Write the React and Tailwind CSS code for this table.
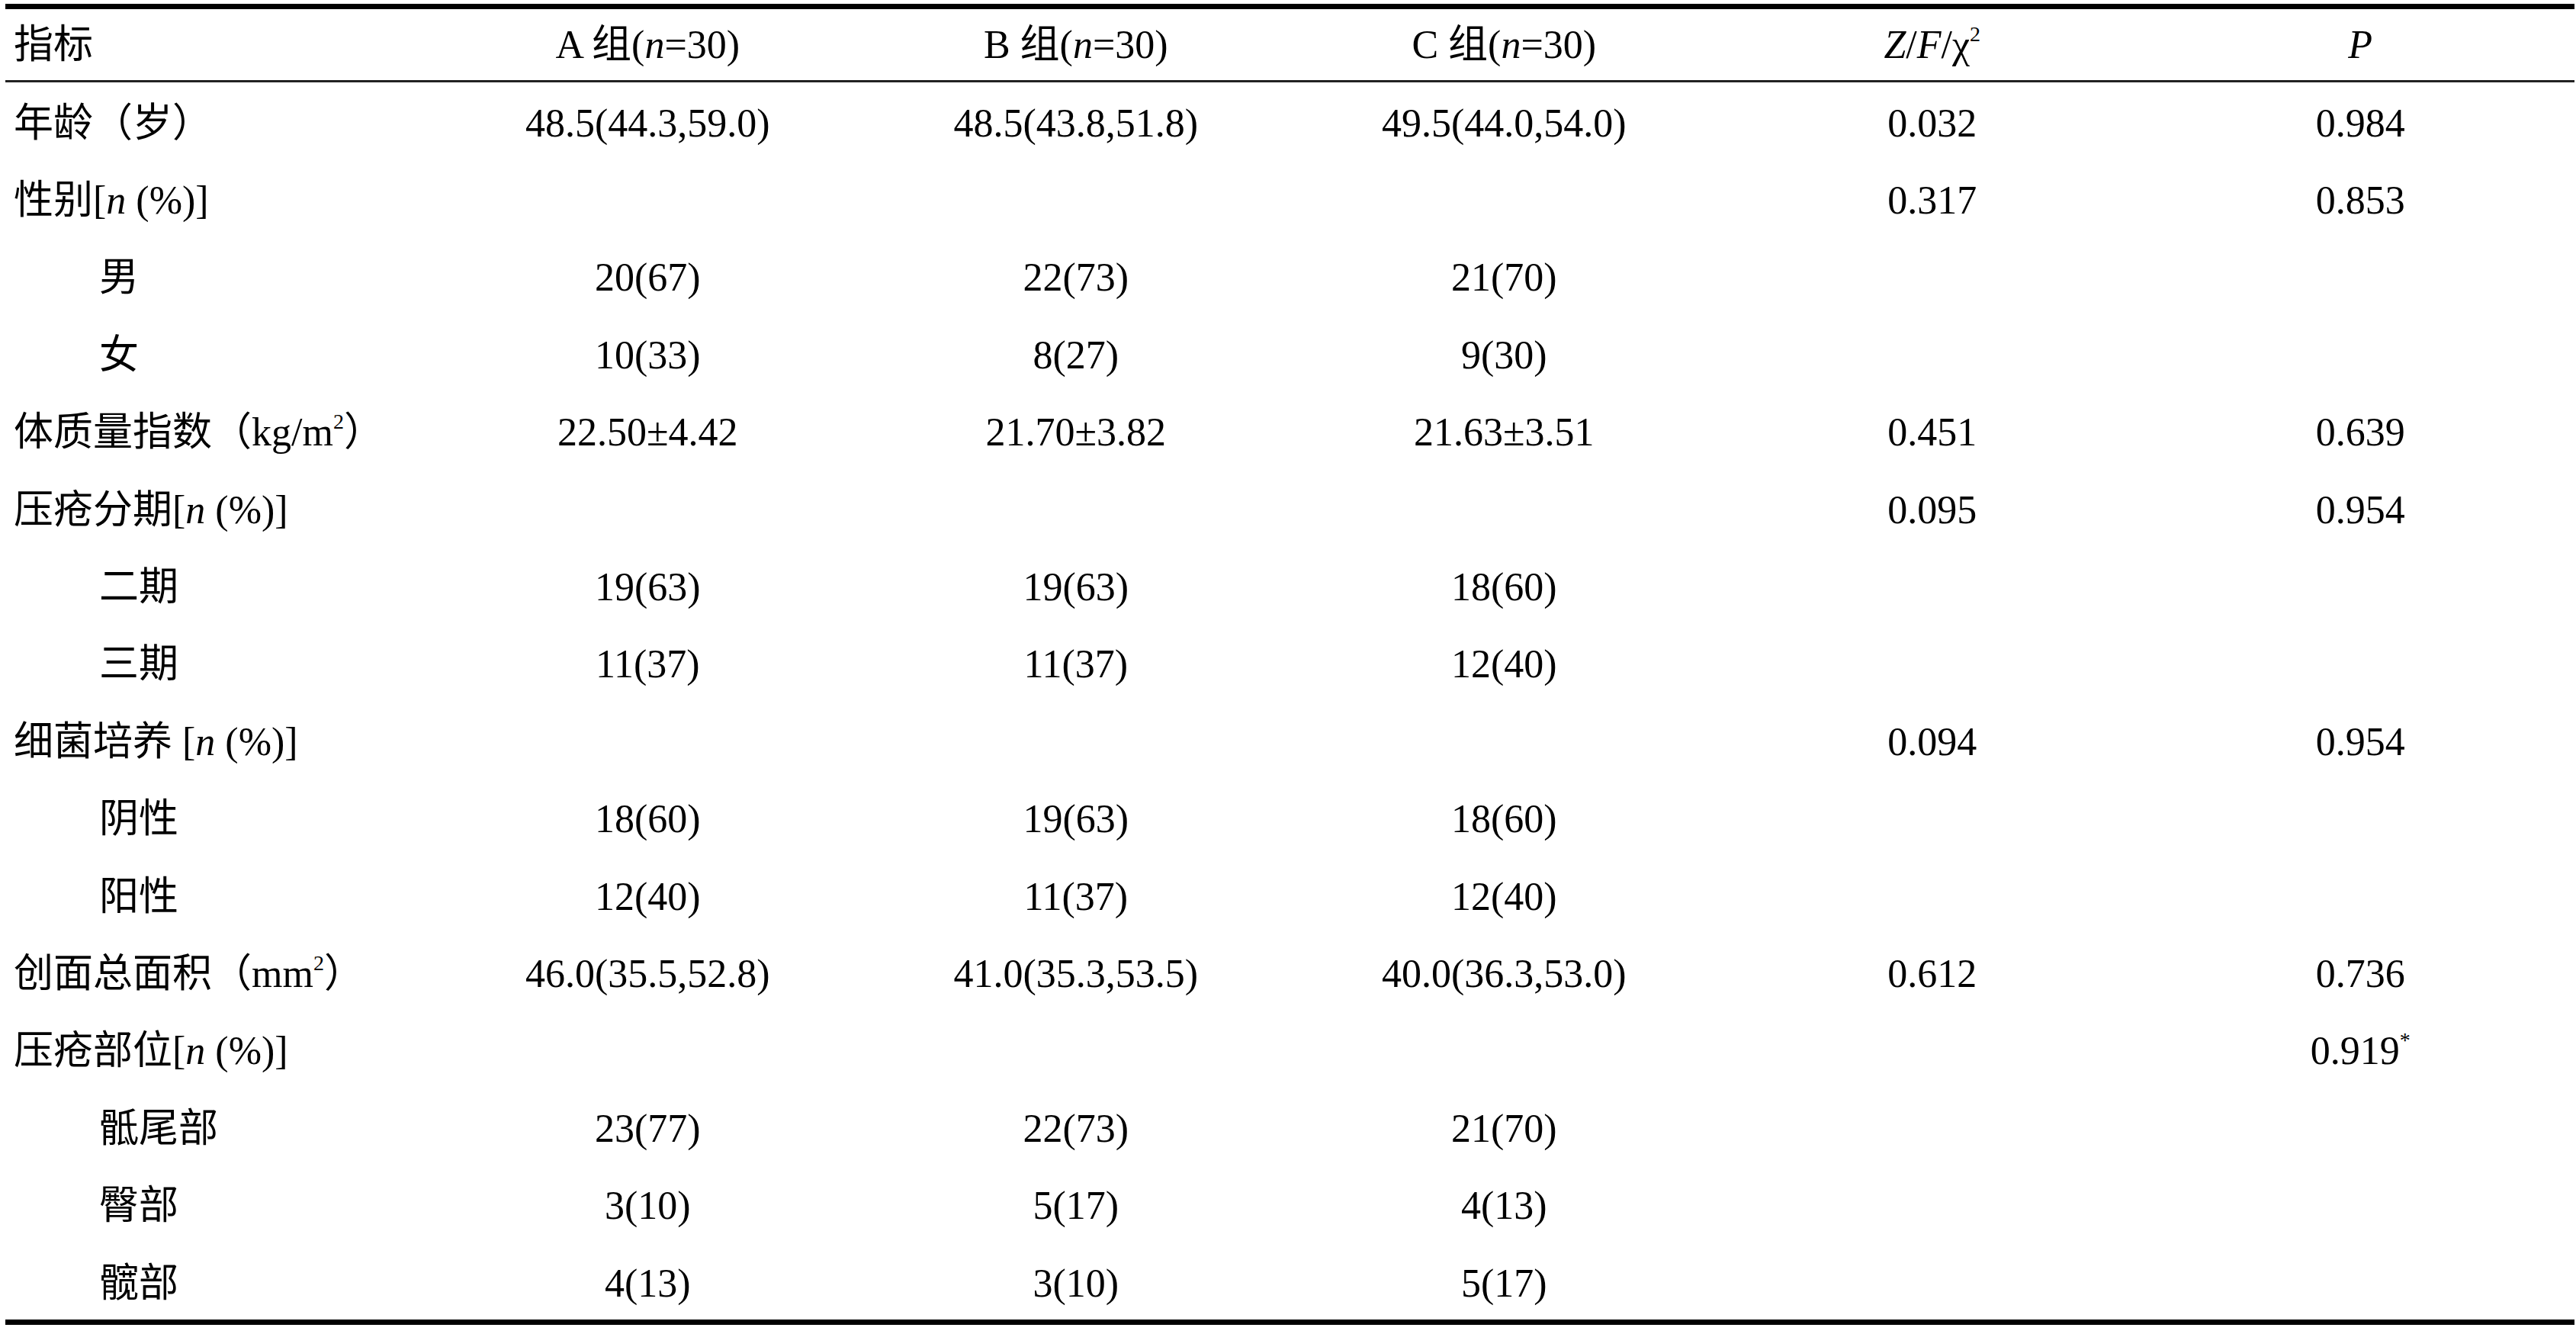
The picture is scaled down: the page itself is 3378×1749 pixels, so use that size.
import React from "react";

const serif = "font-['Liberation_Serif','Noto_Sans_CJK_SC',serif]";

const N = () => <i>n</i>;

const rows = [
  {
    label: "年龄（岁）",
    a: "48.5(44.3,59.0)",
    b: "48.5(43.8,51.8)",
    c: "49.5(44.0,54.0)",
    z: "0.032",
    p: "0.984",
  },
  {
    label: (
      <>
        性别[<N />&nbsp;(%)]
      </>
    ),
    z: "0.317",
    p: "0.853",
  },
  { label: "男", sub: true, a: "20(67)", b: "22(73)", c: "21(70)" },
  { label: "女", sub: true, a: "10(33)", b: "8(27)", c: "9(30)" },
  {
    label: (
      <>
        体质量指数（kg/m<sup className="text-[28px]">2</sup>）
      </>
    ),
    a: "22.50±4.42",
    b: "21.70±3.82",
    c: "21.63±3.51",
    z: "0.451",
    p: "0.639",
  },
  {
    label: (
      <>
        压疮分期[<N />&nbsp;(%)]
      </>
    ),
    z: "0.095",
    p: "0.954",
  },
  { label: "二期", sub: true, a: "19(63)", b: "19(63)", c: "18(60)" },
  { label: "三期", sub: true, a: "11(37)", b: "11(37)", c: "12(40)" },
  {
    label: (
      <>
        细菌培养 [<N />&nbsp;(%)]
      </>
    ),
    z: "0.094",
    p: "0.954",
  },
  { label: "阴性", sub: true, a: "18(60)", b: "19(63)", c: "18(60)" },
  { label: "阳性", sub: true, a: "12(40)", b: "11(37)", c: "12(40)" },
  {
    label: (
      <>
        创面总面积（mm<sup className="text-[28px]">2</sup>）
      </>
    ),
    a: "46.0(35.5,52.8)",
    b: "41.0(35.3,53.5)",
    c: "40.0(36.3,53.0)",
    z: "0.612",
    p: "0.736",
  },
  {
    label: (
      <>
        压疮部位[<N />&nbsp;(%)]
      </>
    ),
    p: (
      <>
        0.919<sup className="text-[28px]">*</sup>
      </>
    ),
  },
  { label: "骶尾部", sub: true, a: "23(77)", b: "22(73)", c: "21(70)" },
  { label: "臀部", sub: true, a: "3(10)", b: "5(17)", c: "4(13)" },
  { label: "髋部", sub: true, a: "4(13)", b: "3(10)", c: "5(17)" },
];

const Cell = ({ children }) => (
  <div className="flex items-center justify-center whitespace-nowrap">{children}</div>
);

export default function App() {
  return (
    <div className={`min-h-screen bg-white pl-[7px] pr-[2px] pt-[5px] text-black ${serif}`}>
      <div className="border-t-[7px] border-b-[7px] border-black">
        <div className="grid h-[96px] grid-cols-6 border-b-[3px] border-[#222] text-[52px] leading-none">
          <div className="flex items-center pl-[11px]">指标</div>
          <Cell>
            A 组(<N />=30)
          </Cell>
          <Cell>
            B 组(<N />=30)
          </Cell>
          <Cell>
            C 组(<N />=30)
          </Cell>
          <Cell>
            <i>Z</i>/<i>F</i>/χ<sup className="text-[28px]">2</sup>
          </Cell>
          <Cell>
            <i>P</i>
          </Cell>
        </div>
        {rows.map((r, i) => (
          <div key={i} className="grid h-[101.4px] grid-cols-6 pt-[6px] text-[52px] leading-none">
            <div
              className={`flex items-center whitespace-nowrap ${
                r.sub ? "pl-[123px]" : "pl-[11px]"
              }`}
            >
              {r.label}
            </div>
            <Cell>{r.a}</Cell>
            <Cell>{r.b}</Cell>
            <Cell>{r.c}</Cell>
            <Cell>{r.z}</Cell>
            <Cell>{r.p}</Cell>
          </div>
        ))}
      </div>
    </div>
  );
}
